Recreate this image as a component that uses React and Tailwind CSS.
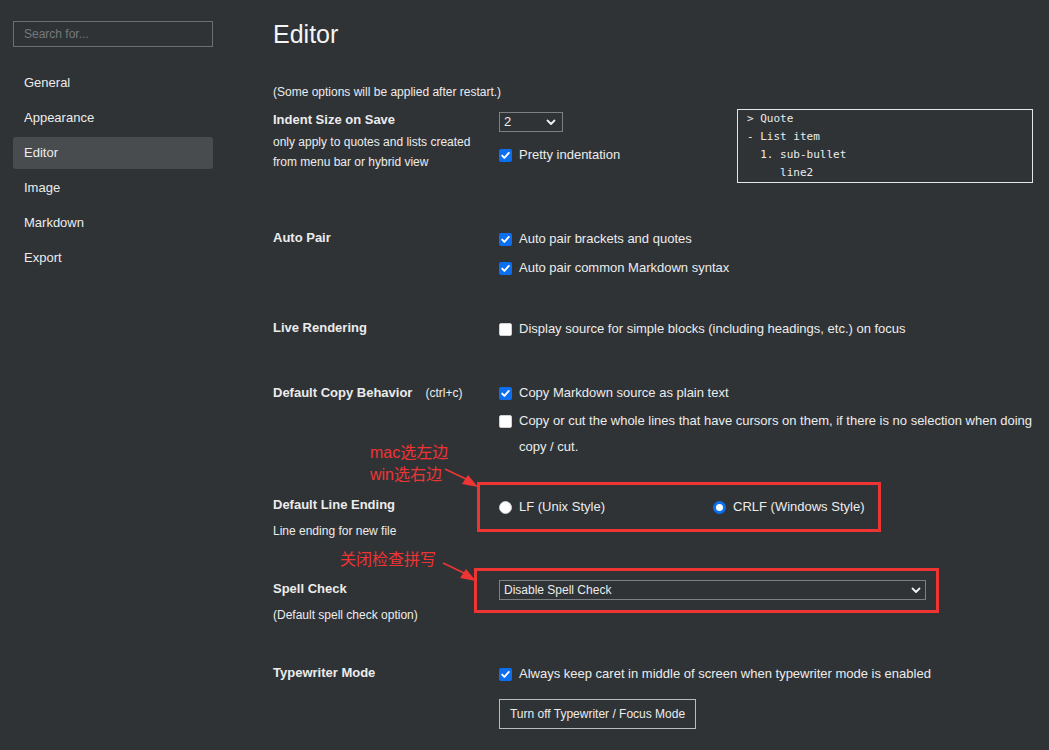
import React from 'react';

const Check = ({ checked }) =>
    checked ? (
        <span className="w-[13px] h-[13px] rounded-[2px] bg-[#0b6ff0] flex items-center justify-center shrink-0">
            <svg width="11" height="11" viewBox="0 0 11 11">
                <path d="M2.2 5.6 L4.4 7.9 L8.8 2.9" fill="none" stroke="#fff" strokeWidth="1.9" strokeLinecap="round" strokeLinejoin="round" />
            </svg>
        </span>
    ) : (
        <span className="block w-[13px] h-[13px] rounded-[2px] bg-white border border-[#d0d0d0] shrink-0" />
    );

const Radio = ({ checked }) =>
    checked ? (
        <span className="w-[13px] h-[13px] rounded-full bg-white border-[3px] border-[#0b6ff0] shrink-0" />
    ) : (
        <span className="w-[13px] h-[13px] rounded-full bg-white border border-[#d0d0d0] shrink-0" />
    );

const Chevron = () => (
    <svg width="10" height="7" viewBox="0 0 10 7">
        <path d="M1.5 1.5 L5 5 L8.5 1.5" fill="none" stroke="#f0f0f0" strokeWidth="1.8" strokeLinecap="round" strokeLinejoin="round" />
    </svg>
);

const Option = ({ checked, children, className = '' }) => (
    <div className={`flex items-center gap-[7px] h-[20px] text-[13px] ${className}`}>
        <Check checked={checked} />
        <span>{children}</span>
    </div>
);

const Arrow = ({ className }) => (
    <svg className={className} width="40" height="24" viewBox="0 0 40 24">
        <line x1="1" y1="2" x2="24" y2="13" stroke="#ef3434" strokeWidth="1.6" />
        <polygon points="34,20 18,17 24,8" fill="#ef3434" />
    </svg>
);

const nav = ['General', 'Appearance', 'Editor', 'Image', 'Markdown', 'Export'];

export default function App() {
    return (
        <div className="w-[1049px] h-[750px] overflow-hidden bg-[#2f3336] text-[#ececec] flex font-['Liberation_Sans','Noto_Sans_CJK_SC',sans-serif]">
            {/* sidebar */}
            <aside className="w-[260px] shrink-0 pt-[21px] pl-[13px]">
                <div className="w-[200px] h-[26px] border border-[#6c6f72] flex items-center pl-[10px] text-[12px] text-[#75797c]">
                    Search for...
                </div>
                <nav className="mt-[20px] flex flex-col gap-[3px] w-[200px]">
                    {nav.map((n) => (
                        <div
                            key={n}
                            className={`h-[32px] flex items-center pl-[11px] text-[13px] rounded-[3px] ${n === 'Editor' ? 'bg-[#484c4f]' : ''}`}
                        >
                            {n}
                        </div>
                    ))}
                </nav>
            </aside>

            {/* main */}
            <main className="relative flex-1 pl-[13px] pt-[20px]">
                <h1 className="text-[25px] leading-[28px] font-normal text-[#f4f4f4]">Editor</h1>
                <p className="mt-[34px] text-[12px] leading-[20px]">(Some options will be applied after restart.)</p>

                {/* Indent size */}
                <section className="mt-[8px] h-[118px] grid grid-cols-[226px_1fr]">
                    <div>
                        <div className="text-[13px] font-bold leading-[20px]">Indent Size on Save</div>
                        <div className="mt-[2px] text-[12px] leading-[20px]">
                            only apply to quotes and lists created
                            <br />
                            from menu bar or hybrid view
                        </div>
                    </div>
                    <div className="flex">
                        <div className="w-[238px]">
                            <div className="mt-[2px] w-[64px] h-[20px] border border-[#7d8083] flex items-center justify-between pl-[4px] pr-[6px] text-[13px]">
                                <span>2</span>
                                <Chevron />
                            </div>
                            <Option checked className="mt-[13px]">Pretty indentation</Option>
                        </div>
                        <div className="-mt-px w-[296px] h-[74px] border border-[#e6e6e6] pl-[9px] font-['DejaVu_Sans_Mono',monospace] text-[11px] leading-[18px] whitespace-pre">
                            <div>{'> Quote'}</div>
                            <div>{'- List item'}</div>
                            <div>{'  1. sub-bullet'}</div>
                            <div>{'     line2'}</div>
                        </div>
                    </div>
                </section>

                {/* Auto pair */}
                <section className="h-[90px] grid grid-cols-[226px_1fr]">
                    <div className="text-[13px] font-bold leading-[20px]">Auto Pair</div>
                    <div className="pt-[1px] flex flex-col gap-[9px]">
                        <Option checked>Auto pair brackets and quotes</Option>
                        <Option checked>Auto pair common Markdown syntax</Option>
                    </div>
                </section>

                {/* Live rendering */}
                <section className="h-[64px] grid grid-cols-[226px_1fr]">
                    <div className="text-[13px] font-bold leading-[20px]">Live Rendering</div>
                    <div className="pt-[1px]">
                        <Option>Display source for simple blocks (including headings, etc.) on focus</Option>
                    </div>
                </section>

                {/* Copy behavior */}
                <section className="h-[113px] grid grid-cols-[226px_1fr]">
                    <div className="leading-[20px]">
                        <span className="text-[13px] font-bold">Default Copy Behavior</span>
                        <span className="ml-[13px] text-[12px]">(ctrl+c)</span>
                    </div>
                    <div className="pt-[1px]">
                        <Option checked>Copy Markdown source as plain text</Option>
                        <div className="mt-[5px] flex items-start gap-[7px] text-[13px] leading-[26px] pr-[8px]">
                            <div className="mt-[7px]">
                                <Check />
                            </div>
                            <span>
                                Copy or cut the whole lines that have cursors on them, if there is no selection when doing copy / cut.
                            </span>
                        </div>
                    </div>
                </section>

                {/* Line ending */}
                <section className="h-[84px] grid grid-cols-[226px_1fr]">
                    <div>
                        <div className="text-[13px] font-bold leading-[20px]">Default Line Ending</div>
                        <div className="mt-[6px] text-[12px] leading-[20px]">Line ending for new file</div>
                    </div>
                    <div className="pt-[2px] flex h-[22px] items-center text-[13px]">
                        <div className="w-[214px] flex items-center gap-[7px]">
                            <Radio />
                            <span>LF (Unix Style)</span>
                        </div>
                        <div className="flex items-center gap-[7px]">
                            <Radio checked />
                            <span>CRLF (Windows Style)</span>
                        </div>
                    </div>
                </section>

                {/* Spell check */}
                <section className="h-[84px] grid grid-cols-[226px_1fr]">
                    <div>
                        <div className="text-[13px] font-bold leading-[20px]">Spell Check</div>
                        <div className="mt-[6px] text-[12px] leading-[20px]">(Default spell check option)</div>
                    </div>
                    <div className="pt-[1px]">
                        <div className="w-[427px] h-[20px] border border-[#7d8083] flex items-center justify-between pl-[4px] pr-[4px] text-[12px]">
                            <span>Disable Spell Check</span>
                            <Chevron />
                        </div>
                    </div>
                </section>

                {/* Typewriter */}
                <section className="grid grid-cols-[226px_1fr]">
                    <div className="text-[13px] font-bold leading-[20px]">Typewriter Mode</div>
                    <div className="pt-[1px]">
                        <Option checked>Always keep caret in middle of screen when typewriter mode is enabled</Option>
                        <button className="mt-[15px] w-[197px] h-[30px] border border-[#b9bbbd] text-[12px] text-[#ececec] flex items-center justify-center">
                            Turn off Typewriter / Focus Mode
                        </button>
                    </div>
                </section>

                {/* annotations */}
                <div className="absolute left-[110px] top-[442px] text-[16px] leading-[22px] text-[#ef3434]">
                    <div>mac选左边</div>
                    <div>win选右边</div>
                </div>
                <Arrow className="absolute left-[184px] top-[467px]" />
                <div className="absolute left-[217px] top-[482px] w-[404px] h-[50px] border-[3px] border-[#ef3434]" />

                <div className="absolute left-[80px] top-[549px] text-[16px] leading-[22px] text-[#ef3434]">关闭检查拼写</div>
                <Arrow className="absolute left-[182px] top-[561px]" />
                <div className="absolute left-[214px] top-[568px] w-[465px] h-[45px] border-[3px] border-[#ef3434]" />
            </main>
        </div>
    );
}
